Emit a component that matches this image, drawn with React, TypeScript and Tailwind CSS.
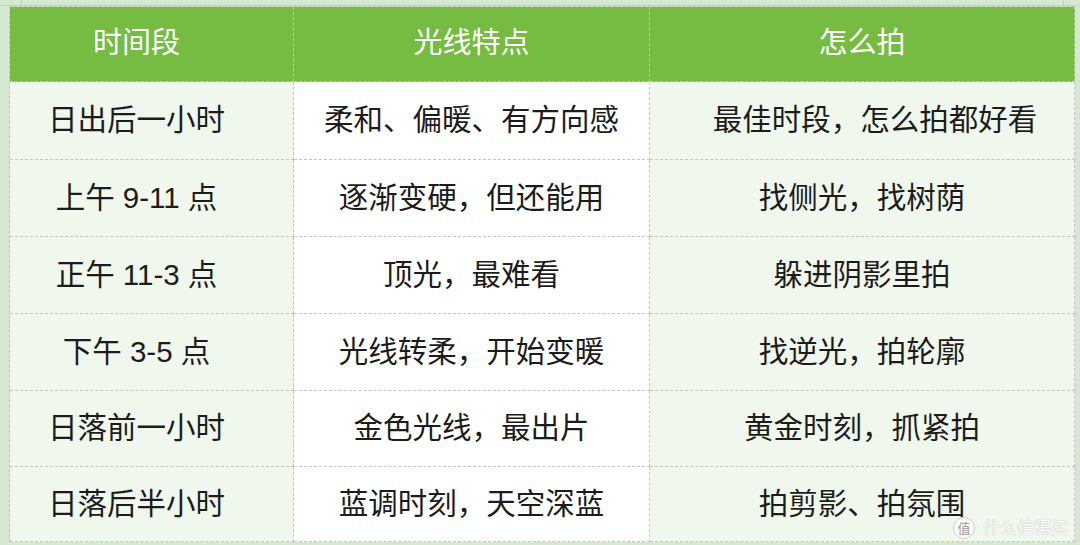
import React from "react";

const rows: [string, string, string][] = [
  ["日出后一小时", "柔和、偏暖、有方向感", "最佳时段，怎么拍都好看"],
  ["上午 9-11 点", "逐渐变硬，但还能用", "找侧光，找树荫"],
  ["正午 11-3 点", "顶光，最难看", "躲进阴影里拍"],
  ["下午 3-5 点", "光线转柔，开始变暖", "找逆光，拍轮廓"],
  ["日落前一小时", "金色光线，最出片", "黄金时刻，抓紧拍"],
  ["日落后半小时", "蓝调时刻，天空深蓝", "拍剪影、拍氛围"],
];

const rowH = ["h-[78px]", "h-[77px]", "h-[77px]", "h-[77px]", "h-[76px]", "h-[75px]"];

export default function App() {
  return (
    <div
      className="relative w-[1080px] h-[545px] overflow-hidden bg-[#d4e9cf]"
      style={{ fontFamily: '"Liberation Sans", "Noto Sans CJK SC", sans-serif' }}
    >
      <div className="flex h-[6px] border-b border-[#bcd6b4]">
        <div className="w-[22px] border-r border-[#bcd6b4]" />
        <div className="flex-1" />
        <div className="w-[17px] border-l border-[#bcd6b4]" />
      </div>
      <div className="ml-[9px] w-[1066px] border-l border-t border-dashed border-[#c4c4c4]">
        <div className="flex h-[75px] bg-[#76bb42] text-white text-[29px]">
          <div className="w-[284px] flex items-center justify-center pr-[30px] border-r border-b border-dashed border-[#c4c4c4]">时间段</div>
          <div className="w-[356px] flex items-center justify-center border-r border-b border-dashed border-[#c4c4c4]">光线特点</div>
          <div className="flex-1 flex items-center justify-center border-r border-b border-dashed border-[#c4c4c4]">怎么拍</div>
        </div>
        {rows.map((r, i) => (
          <div key={i} className={`flex ${rowH[i]} text-[29.5px] text-[#1c1c1c]`}>
            <div className="w-[284px] flex items-center justify-center pr-[30px] bg-[#f0f7ec] border-r border-b border-dashed border-[#c4c4c4] whitespace-nowrap">{r[0]}</div>
            <div className="w-[356px] flex items-center justify-center bg-white border-r border-b border-dashed border-[#c4c4c4] whitespace-nowrap">{r[1]}</div>
            <div className={`flex-1 flex items-center justify-center bg-[#f0f7ec] border-r border-b border-dashed border-[#c4c4c4] whitespace-nowrap ${i === 0 ? "pl-[26px]" : ""}`}>{r[2]}</div>
          </div>
        ))}
      </div>
      <div className="absolute left-[953px] top-[517px] flex items-center gap-[8px]">
        <div className="w-[22px] h-[22px] rounded-full bg-white/85 border border-[#d0d0d0] flex items-center justify-center text-[13px] text-[#9a9a9a] leading-none">值</div>
        <div className="text-[17px] text-white leading-none whitespace-nowrap" style={{ textShadow: "0 0 1px #9a9a9a" }}>什么值得买</div>
      </div>
    </div>
  );
}
